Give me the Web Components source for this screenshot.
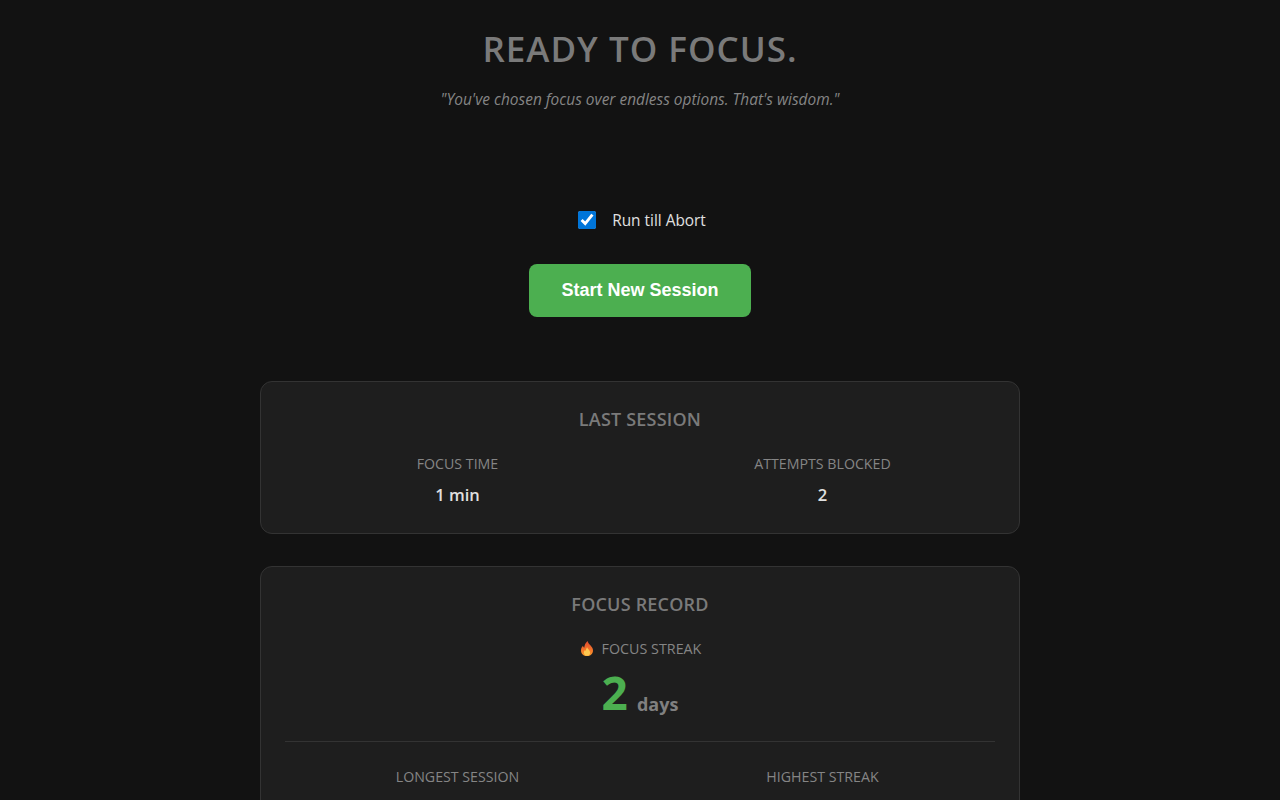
<!DOCTYPE html>
<html lang="en">
<head>
<meta charset="utf-8">
<title>Ready to focus</title>
<style>
  html, body { margin: 0; height: 100%; overflow: hidden; background: #121212; }
  body { font-family: "Open Sans", "Noto Sans", sans-serif; color: #e0e0e0; }
</style>
</head>
<body>
<focus-page></focus-page>

<script>
const sheet = `
  * { box-sizing: border-box; }
`;

class FocusHeader extends HTMLElement {
  constructor() {
    super();
    this.attachShadow({ mode: 'open' }).innerHTML = `
<style>${sheet}
  :host { display: block; text-align: center; }
  h1 { margin: 0; font-size: 35px; line-height: 45px; font-weight: 600; color: #7a7a7a; letter-spacing: 1px; }
  p { margin: 18px 0 0; font-size: 15.45px; line-height: 20px; font-style: italic; color: #858585; }
</style>
<h1><slot name="title"></slot></h1>
<p><slot name="quote"></slot></p>`;
  }
}

class FocusStart extends HTMLElement {
  constructor() {
    super();
    this.attachShadow({ mode: 'open' }).innerHTML = `
<style>${sheet}
  :host { display: flex; flex-direction: column; align-items: center; }
  label { display: flex; align-items: center; gap: 16px; height: 20px; padding-left: 4px; font-size: 15.4px; color: #e0e0e0; }
  input { width: 18px; height: 18px; margin: 0; accent-color: #0075d9; }
  button { margin-top: 34px; width: 222px; height: 53px; border: 0; border-radius: 8px; background: #4caf50; color: #fff;
    font: 700 18px "Liberation Sans", Arial, sans-serif; }
</style>
<label><input type="checkbox" checked><span>Run till Abort</span></label>
<button>Start New Session</button>`;
  }
}

class FocusCard extends HTMLElement {
  constructor() {
    super();
    this.attachShadow({ mode: 'open' }).innerHTML = `
<style>${sheet}
  :host { display: block; background: #1e1e1e; border: 1px solid #333; border-radius: 12px; padding: 23px 24px 26px; }
  h2 { margin: 0; text-align: center; font-size: 18px; line-height: 28px; font-weight: 600; color: #7a7a7a; letter-spacing: .2px; }
</style>
<h2>${this.getAttribute('heading')}</h2>
<slot></slot>`;
  }
}

class StatPair extends HTMLElement {
  constructor() {
    super();
    this.attachShadow({ mode: 'open' }).innerHTML = `
<style>${sheet}
  :host { display: grid; grid-template-columns: 1fr 1fr; gap: 0 20px; text-align: center; }
</style>
<slot></slot>`;
  }
}

class StatItem extends HTMLElement {
  constructor() {
    super();
    this.attachShadow({ mode: 'open' }).innerHTML = `
<style>${sheet}
  :host { display: block; }
  .label { font-size: 14.2px; line-height: 19px; color: #858585; }
  .value { margin-top: 10px; min-height: 24px; font-size: 16.5px; line-height: 24px; font-weight: 600; color: #e0e0e0; }
</style>
<div class="label">${this.getAttribute('label')}</div>
<div class="value">${this.getAttribute('value')}</div>`;
  }
}

class StreakBlock extends HTMLElement {
  constructor() {
    super();
    this.attachShadow({ mode: 'open' }).innerHTML = `
<style>${sheet}
  :host { display: block; text-align: center; }
  .label { display: flex; justify-content: center; align-items: center; gap: 9px; padding-left: 2px; font-size: 14.3px; line-height: 19px; color: #858585; }
  svg { width: 12px; height: 15px; display: block; }
  .value { margin-top: 5px; height: 58px; line-height: 58px; white-space: nowrap; }
  b { font-size: 46px; font-weight: 700; color: #4caf50; }
  .unit { margin-left: 9px; font-size: 18px; font-weight: 700; color: #808080; vertical-align: -1px; }
</style>
<div class="label">
  <svg viewBox="0 0 12 15">
    <defs>
      <linearGradient id="flame" x1="0" y1="0" x2="0" y2="1">
        <stop offset="0" stop-color="#e0492f"/>
        <stop offset=".6" stop-color="#f4762a"/>
        <stop offset="1" stop-color="#f79a2c"/>
      </linearGradient>
    </defs>
    <path fill="url(#flame)" d="M6.600 0c.3 2 1.700 3 3 4.500C10.900 6 12 7.600 12 9.400 12 12.800 9.400 15 6 15S0 12.800 0 9.400C0 7.500.8 5.900 2 4.800c.2 1 .6 1.600 1.300 2C3.300 4.300 4.600 1.700 6.600 0z"/>
    <path fill="#fdc850" d="M6.200 6.300c.3 1.300 1.200 2 2 3 .6.800.9 1.500.9 2.400 0 1.900-1.400 3.100-3.100 3.100s-3.100-1.200-3.100-3.100c0-1.100.5-2 1.200-2.600.1.400.4.700.7.900.1-1.500.6-2.800 1.400-3.700z"/>
  </svg>
  <span>FOCUS STREAK</span>
</div>
<div class="value"><b>2</b><span class="unit">days</span></div>`;
  }
}

class FocusPage extends HTMLElement {
  constructor() {
    super();
    this.attachShadow({ mode: 'open' }).innerHTML = `
<style>${sheet}
  :host { display: block; width: 760px; margin: 0 auto; padding-top: 26px; }
  focus-start { margin-top: 101px; }
  .last { display: block; margin-top: 64px; }
  .last stat-pair { margin-top: 21px; }
  .record { display: block; margin-top: 32px; }
  streak-block { margin-top: 21px; }
  .divider { height: 1px; background: #333; margin: 20px 0 25px; }
</style>
<focus-header>
  <span slot="title">READY TO FOCUS.</span>
  <span slot="quote">"You've chosen focus over endless options. That's wisdom."</span>
</focus-header>
<focus-start></focus-start>
<focus-card class="last" heading="LAST SESSION">
  <stat-pair>
    <stat-item label="FOCUS TIME" value="1 min"></stat-item>
    <stat-item label="ATTEMPTS BLOCKED" value="2"></stat-item>
  </stat-pair>
</focus-card>
<focus-card class="record" heading="FOCUS RECORD">
  <streak-block></streak-block>
  <div class="divider"></div>
  <stat-pair>
    <stat-item label="LONGEST SESSION" value=""></stat-item>
    <stat-item label="HIGHEST STREAK" value=""></stat-item>
  </stat-pair>
</focus-card>`;
  }
}

customElements.define('focus-header', FocusHeader);
customElements.define('focus-start', FocusStart);
customElements.define('focus-card', FocusCard);
customElements.define('stat-pair', StatPair);
customElements.define('stat-item', StatItem);
customElements.define('streak-block', StreakBlock);
customElements.define('focus-page', FocusPage);
</script>
</body>
</html>
